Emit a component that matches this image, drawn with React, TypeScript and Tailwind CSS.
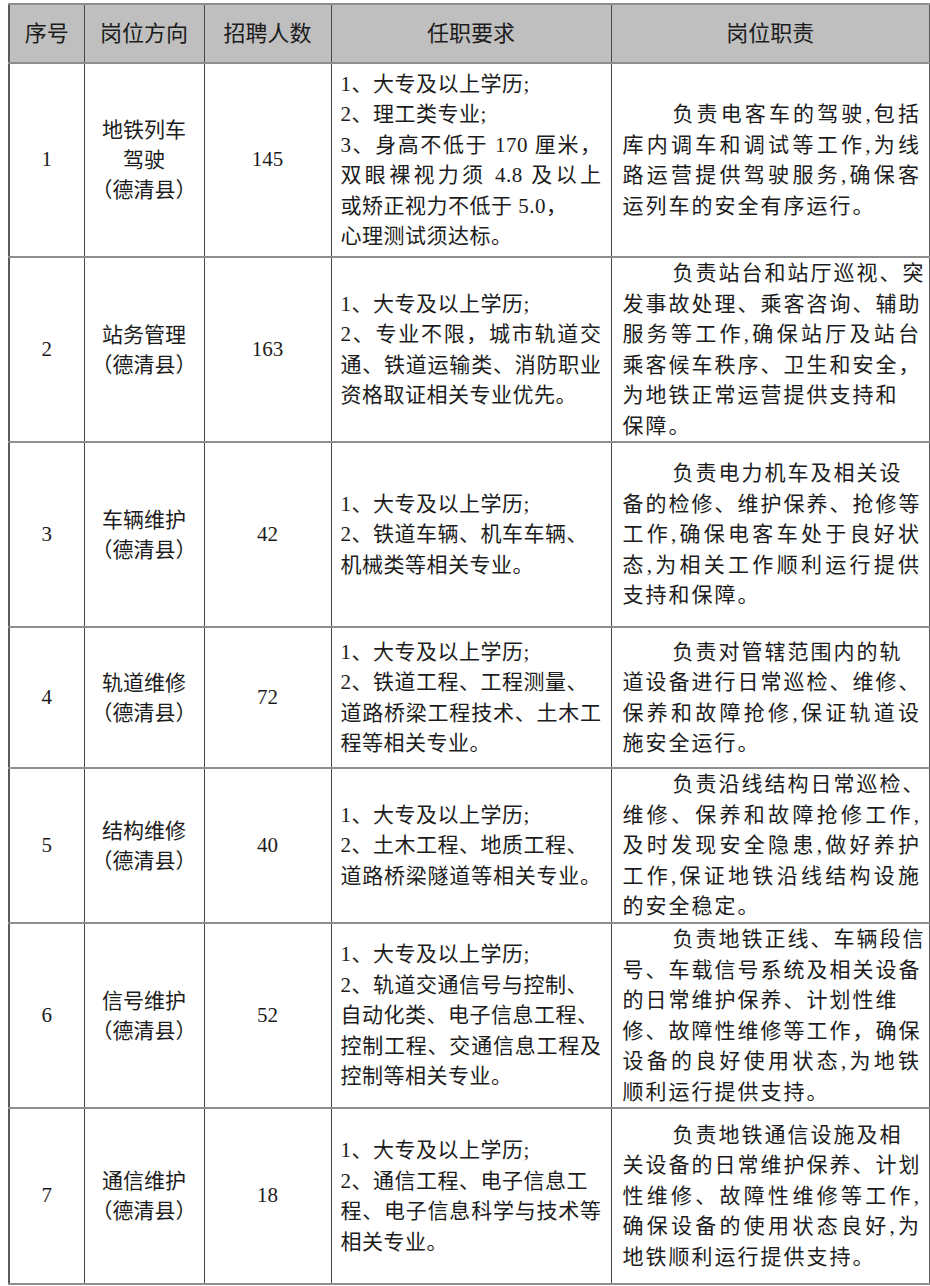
import React from 'react';

type Line = { t: string; j?: boolean };

type Row = {
  no: string;
  pos: string[];
  count: string;
  h: string;
  req: Line[];
  duty: Line[];
};

const L = (t: string, j = false): Line => ({ t, j });

const rows: Row[] = [
  {
    no: '1',
    pos: ['地铁列车', '驾驶', '（德清县）'],
    count: '145',
    h: 'h-[194px]',
    req: [
      L('1、大专及以上学历;'),
      L('2、理工类专业;'),
      L('3、身高不低于 170 厘米，', true),
      L('双眼裸视力须 4.8 及以上', true),
      L('或矫正视力不低于 5.0，'),
      L('心理测试须达标。'),
    ],
    duty: [
      L('负责电客车的驾驶,包括', true),
      L('库内调车和调试等工作,为线', true),
      L('路运营提供驾驶服务,确保客', true),
      L('运列车的安全有序运行。'),
    ],
  },
  {
    no: '2',
    pos: ['站务管理', '（德清县）'],
    count: '163',
    h: 'h-[185px]',
    req: [
      L('1、大专及以上学历;'),
      L('2、专业不限，城市轨道交', true),
      L('通、铁道运输类、消防职业', true),
      L('资格取证相关专业优先。'),
    ],
    duty: [
      L('负责站台和站厅巡视、突', true),
      L('发事故处理、乘客咨询、辅助', true),
      L('服务等工作,确保站厅及站台', true),
      L('乘客候车秩序、卫生和安全，', true),
      L('为地铁正常运营提供支持和'),
      L('保障。'),
    ],
  },
  {
    no: '3',
    pos: ['车辆维护', '（德清县）'],
    count: '42',
    h: 'h-[185px]',
    req: [
      L('1、大专及以上学历;'),
      L('2、铁道车辆、机车车辆、'),
      L('机械类等相关专业。'),
    ],
    duty: [
      L('负责电力机车及相关设'),
      L('备的检修、维护保养、抢修等', true),
      L('工作,确保电客车处于良好状', true),
      L('态,为相关工作顺利运行提供', true),
      L('支持和保障。'),
    ],
  },
  {
    no: '4',
    pos: ['轨道维修', '（德清县）'],
    count: '72',
    h: 'h-[141px]',
    req: [
      L('1、大专及以上学历;'),
      L('2、铁道工程、工程测量、'),
      L('道路桥梁工程技术、土木工', true),
      L('程等相关专业。'),
    ],
    duty: [
      L('负责对管辖范围内的轨'),
      L('道设备进行日常巡检、维修、', true),
      L('保养和故障抢修,保证轨道设', true),
      L('施安全运行。'),
    ],
  },
  {
    no: '5',
    pos: ['结构维修', '（德清县）'],
    count: '40',
    h: 'h-[155px]',
    req: [
      L('1、大专及以上学历;'),
      L('2、土木工程、地质工程、'),
      L('道路桥梁隧道等相关专业。', true),
    ],
    duty: [
      L('负责沿线结构日常巡检、', true),
      L('维修、保养和故障抢修工作,', true),
      L('及时发现安全隐患,做好养护', true),
      L('工作,保证地铁沿线结构设施', true),
      L('的安全稳定。'),
    ],
  },
  {
    no: '6',
    pos: ['信号维护', '（德清县）'],
    count: '52',
    h: 'h-[184px]',
    req: [
      L('1、大专及以上学历;'),
      L('2、轨道交通信号与控制、'),
      L('自动化类、电子信息工程、'),
      L('控制工程、交通信息工程及', true),
      L('控制等相关专业。'),
    ],
    duty: [
      L('负责地铁正线、车辆段信', true),
      L('号、车载信号系统及相关设备', true),
      L('的日常维护保养、计划性维'),
      L('修、故障性维修等工作，确保', true),
      L('设备的良好使用状态,为地铁', true),
      L('顺利运行提供支持。'),
    ],
  },
  {
    no: '7',
    pos: ['通信维护', '（德清县）'],
    count: '18',
    h: 'h-[176px]',
    req: [
      L('1、大专及以上学历;'),
      L('2、通信工程、电子信息工'),
      L('程、电子信息科学与技术等', true),
      L('相关专业。'),
    ],
    duty: [
      L('负责地铁通信设施及相'),
      L('关设备的日常维护保养、计划', true),
      L('性维修、故障性维修等工作,', true),
      L('确保设备的使用状态良好,为', true),
      L('地铁顺利运行提供支持。'),
    ],
  },
];

const cell =
  'border-x border-x-[#474747] border-y-2 border-y-[#8e8e8e] align-middle';

function Lines({ lines, indent }: { lines: Line[]; indent?: boolean }) {
  return (
    <div className="leading-[30.5px]">
      {lines.map((line, i) => (
        <div
          key={i}
          className={
            'whitespace-nowrap ' +
            (line.j ? 'text-justify [text-align-last:justify] ' : 'text-left ') +
            (indent && i === 0 ? 'pl-[50px]' : '')
          }
        >
          {line.t}
        </div>
      ))}
    </div>
  );
}

export default function App() {
  return (
    <div className="min-h-[1286px] w-[930px] bg-white pl-[8px] pt-[3px] text-[#1c1c1c] [font-family:'Liberation_Serif','Noto_Sans_CJK_SC',serif]">
      <table className="w-[921px] table-fixed border-collapse border-2 border-[#5a5a5a] text-[21px]">
        <colgroup>
          <col className="w-[75px]" />
          <col className="w-[120px]" />
          <col className="w-[127px]" />
          <col className="w-[280px]" />
          <col className="w-[319px]" />
        </colgroup>
        <thead>
          <tr className="h-[59px] bg-[#bfbfbf] text-[22px]">
            <th className={cell + ' font-normal'}>序号</th>
            <th className={cell + ' font-normal'}>岗位方向</th>
            <th className={cell + ' font-normal'}>招聘人数</th>
            <th className={cell + ' font-normal'}>任职要求</th>
            <th className={cell + ' font-normal'}>岗位职责</th>
          </tr>
        </thead>
        <tbody>
          {rows.map((row, idx) => (
            <tr
              key={row.no}
              className={row.h + (idx === rows.length - 1 ? ' border-b-2 border-b-[#5a5a5a]' : '')}
            >
              <td className={cell + ' text-center'}>{row.no}</td>
              <td className={cell + ' text-center leading-[30px]'}>
                {row.pos.map((p) => (
                  <div key={p}>{p}</div>
                ))}
              </td>
              <td className={cell + ' text-center'}>{row.count}</td>
              <td className={cell + ' pl-[9px] pr-[9px] tracking-[0.5px]'}>
                <Lines lines={row.req} />
              </td>
              <td className={cell + ' pl-[11px] pr-[8px] tracking-[2px]'}>
                <Lines lines={row.duty} indent />
              </td>
            </tr>
          ))}
        </tbody>
      </table>
    </div>
  );
}
